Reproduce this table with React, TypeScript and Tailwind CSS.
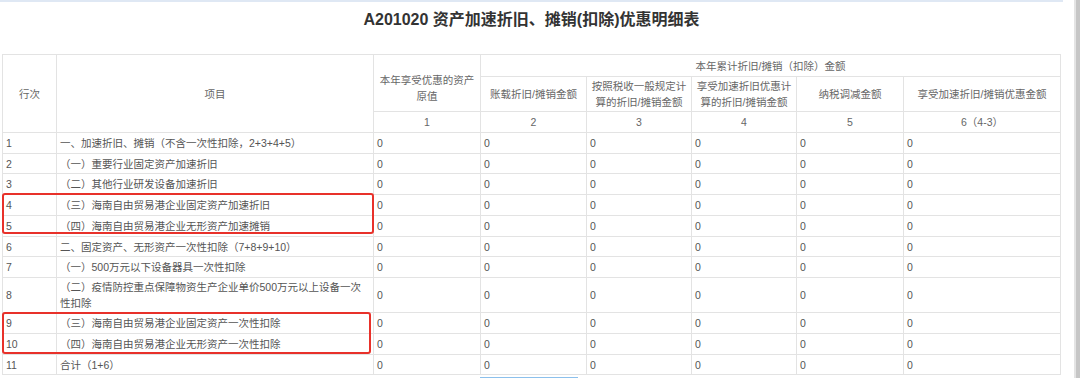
import type { ReactNode } from 'react';

type Row = {
  no: string;
  item: ReactNode;
  h: string;
};

const rows: Row[] = [
  { no: '1', item: '一、加速折旧、摊销（不含一次性扣除，2+3+4+5）', h: 'h-[21px]' },
  { no: '2', item: '（一）重要行业固定资产加速折旧', h: 'h-[20px]' },
  { no: '3', item: '（二）其他行业研发设备加速折旧', h: 'h-[21px]' },
  { no: '4', item: '（三）海南自由贸易港企业固定资产加速折旧', h: 'h-[21px]' },
  { no: '5', item: '（四）海南自由贸易港企业无形资产加速摊销', h: 'h-[21px]' },
  { no: '6', item: '二、固定资产、无形资产一次性扣除（7+8+9+10）', h: 'h-[20px]' },
  { no: '7', item: '（一）500万元以下设备器具一次性扣除', h: 'h-[21px]' },
  {
    no: '8',
    item: (
      <>
        <span className="whitespace-nowrap">（二）疫情防控重点保障物资生产企业单价500万元以上设备一次</span>
        <br />
        性扣除
      </>
    ),
    h: 'h-[35px]',
  },
  { no: '9', item: '（三）海南自由贸易港企业固定资产一次性扣除', h: 'h-[21px]' },
  { no: '10', item: '（四）海南自由贸易港企业无形资产一次性扣除', h: 'h-[21px]' },
  { no: '11', item: '合计（1+6）', h: 'h-[20px]' },
];

const cell = 'border border-[#e3e3e3] px-[3px] py-0 text-left align-middle leading-[16px]';
const head = 'border border-[#e3e3e3] px-0 py-0 text-center align-middle font-normal leading-[16px] whitespace-nowrap';

export default function App() {
  return (
    <div className="flex w-[1080px] h-[378px] overflow-hidden bg-white font-['Liberation_Sans','Noto_Sans_CJK_SC',sans-serif]">
      {/* Page content */}
      <div className="w-[1063px] shrink-0">
        <div className="h-[2px] bg-[#dfe8f4]"></div>

        <div className="h-[36px] flex items-center justify-center">
          <h1 className="text-[16px] font-bold text-[#333333]">
            A201020 资产加速折旧、摊销(扣除)优惠明细表
          </h1>
        </div>

        <div className="relative ml-[2px] mt-[16px] w-[1058px]">
          <table className="w-[1058px] table-fixed border-collapse text-[10.5px] text-[#666666]">
            <colgroup>
              <col className="w-[54px]" />
              <col className="w-[317px]" />
              <col className="w-[107px]" />
              <col className="w-[106px]" />
              <col className="w-[105px]" />
              <col className="w-[105px]" />
              <col className="w-[107px]" />
              <col className="w-[157px]" />
            </colgroup>
            <thead>
              <tr className="h-[22px]">
                <th rowSpan={3} className={head}>行次</th>
                <th rowSpan={3} className={head}>项目</th>
                <th rowSpan={2} className={`${head} pt-[10px]`}>
                  本年享受优惠的资产
                  <br />
                  原值
                </th>
                <th colSpan={5} className={head}>本年累计折旧/摊销（扣除）金额</th>
              </tr>
              <tr className="h-[35px]">
                <th className={head}>账载折旧/摊销金额</th>
                <th className={head}>
                  按照税收一般规定计
                  <br />
                  算的折旧/摊销金额
                </th>
                <th className={head}>
                  享受加速折旧优惠计
                  <br />
                  算的折旧/摊销金额
                </th>
                <th className={head}>纳税调减金额</th>
                <th className={head}>享受加速折旧/摊销优惠金额</th>
              </tr>
              <tr className="h-[21px]">
                <th className={head}>1</th>
                <th className={head}>2</th>
                <th className={head}>3</th>
                <th className={head}>4</th>
                <th className={head}>5</th>
                <th className={head}>6（4-3）</th>
              </tr>
            </thead>
            <tbody className="text-[#555555]">
              {rows.map((row) => (
                <tr key={row.no} className={row.h}>
                  <td className={cell}>{row.no}</td>
                  <td className={cell}>{row.item}</td>
                  <td className={cell}>0</td>
                  <td className={cell}>0</td>
                  <td className={cell}>0</td>
                  <td className={cell}>0</td>
                  <td className={cell}>0</td>
                  <td className={cell}>0</td>
                </tr>
              ))}
            </tbody>
          </table>

          {/* red highlight boxes */}
          <div className="absolute left-0 top-[139px] w-[372px] h-[41px] border-2 border-[#e8312a] rounded-[3px]"></div>
          <div className="absolute left-0 top-[258px] w-[369px] h-[42px] border-2 border-[#e8312a] rounded-[3px]"></div>
        </div>

        <div className="ml-[480px] mt-[2px] w-[98px] h-[2px] bg-[#8cc0ec]"></div>
      </div>

      {/* scrollbar */}
      <div className="ml-[11px] flex h-full">
        <div className="w-[2px] bg-[#e4e4e4]"></div>
        <div className="w-[4px] bg-[#c6c6c6]"></div>
      </div>
    </div>
  );
}
